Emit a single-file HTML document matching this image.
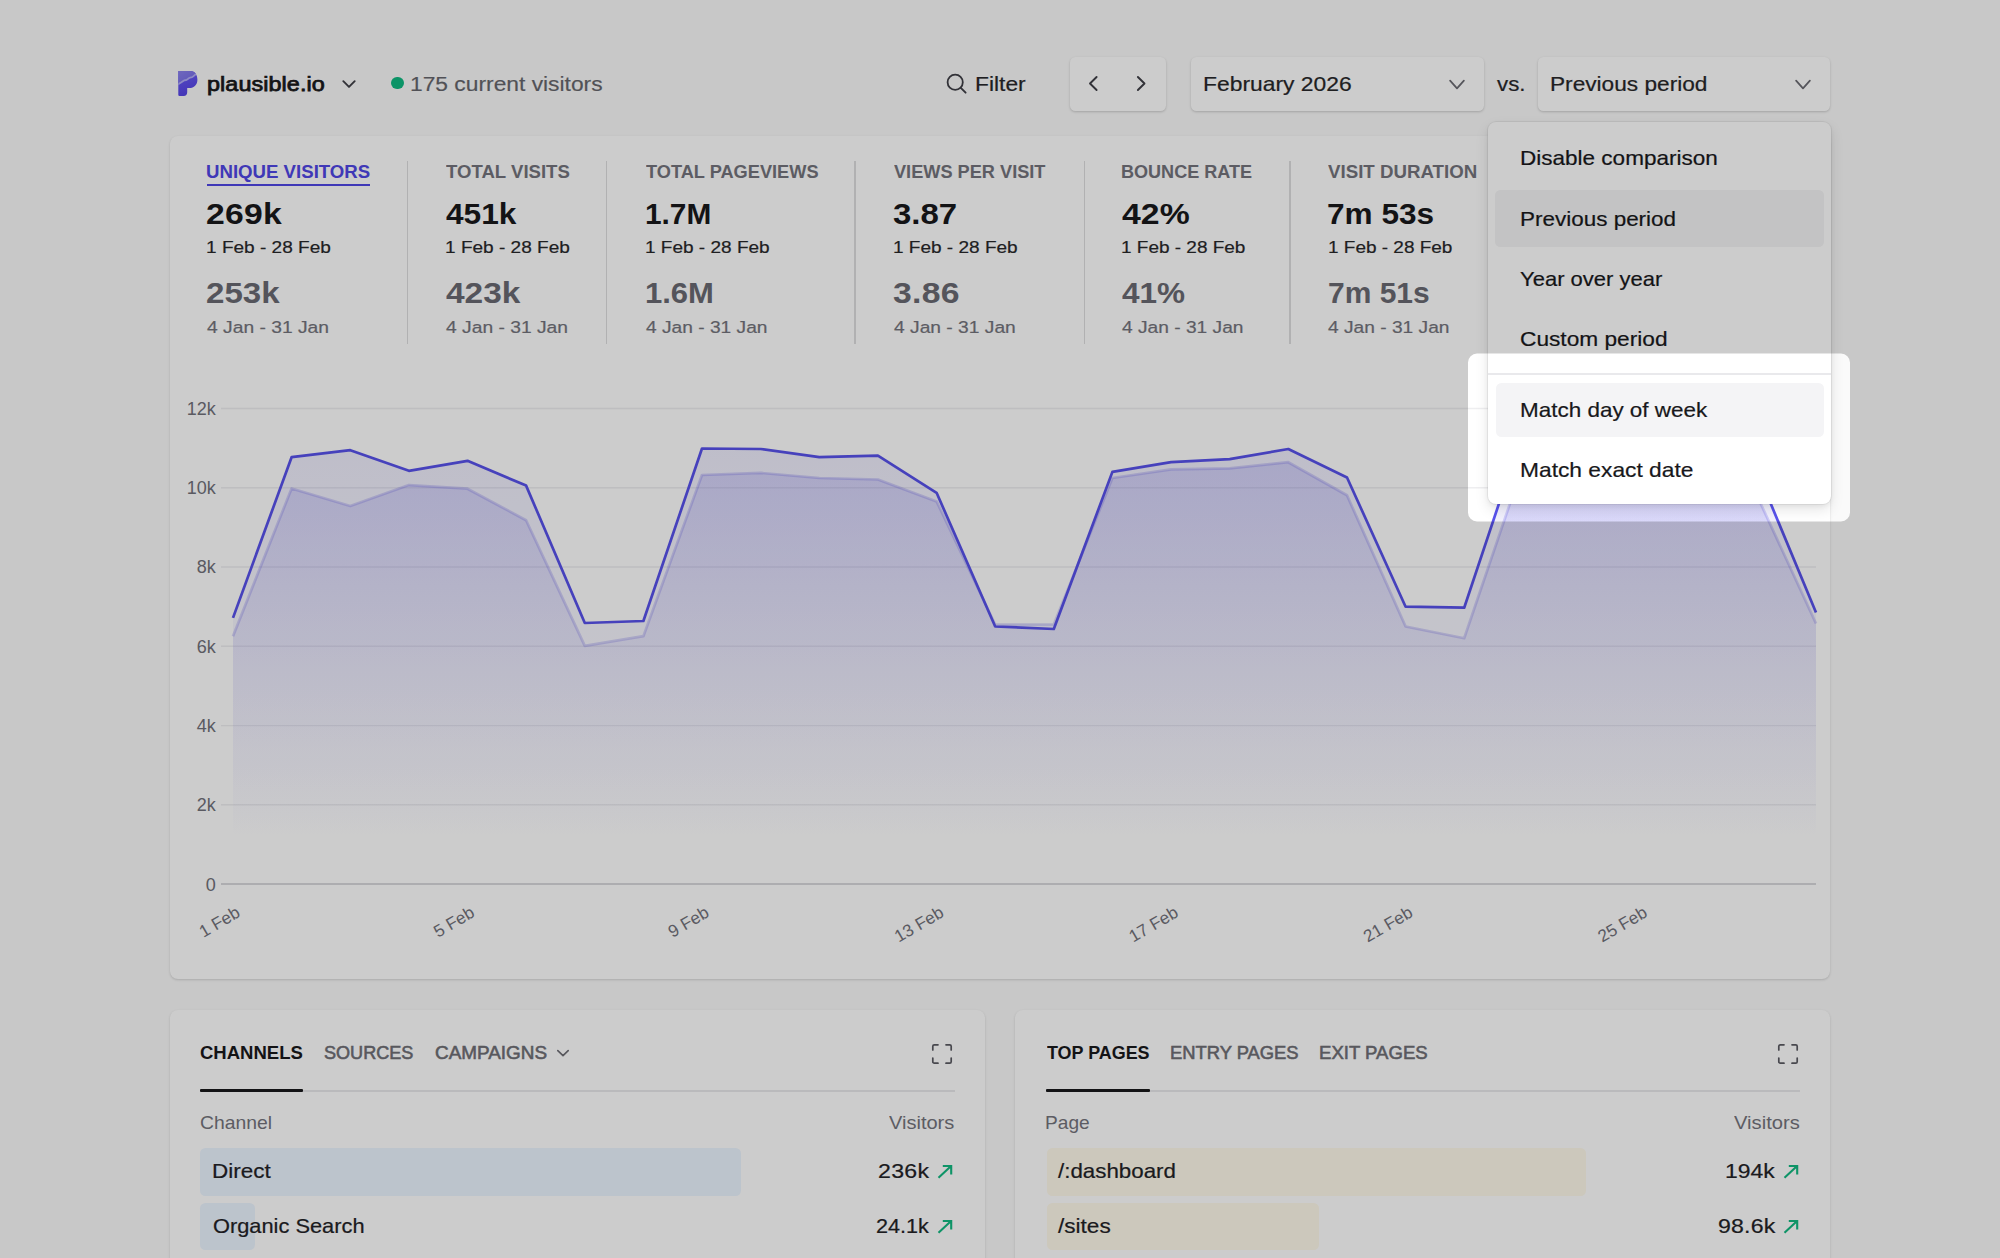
<!DOCTYPE html>
<html lang="en"><head><meta charset="utf-8"><title>Plausible · plausible.io</title>
<style>
html,body{margin:0;padding:0}
header,main,section{display:block;margin:0;padding:0}
body{width:2000px;height:1258px;overflow:hidden;position:relative;background:#fafafa;font-family:"Liberation Sans",sans-serif}
.abs{position:absolute}
.t{position:absolute;white-space:nowrap;line-height:1;margin:0;transform-origin:0 0}
.card{background:#fff;border-radius:8px;box-shadow:0 1px 3px rgba(0,0,0,.10),0 1px 2px rgba(0,0,0,.06)}
.btn{background:#fff;border-radius:5.500px;box-shadow:0 1px 3px rgba(0,0,0,.12),0 1px 2px rgba(0,0,0,.07)}
.menu{background:#fff;border-radius:8px;box-shadow:0 0 0 1px rgba(0,0,0,.05),0 6px 14px rgba(0,0,0,.10),0 2px 5px rgba(0,0,0,.06)}
.bar{border-radius:5.500px}
.ax{font-family:"Liberation Sans",sans-serif;font-size:17.140px;fill:#71717a}
</style></head><body>
<header>
<svg class="abs" style="left:177px;top:70px" width="22" height="27" viewBox="0 0 22 27">
<defs><linearGradient id="lg" x1="0" y1="0" x2="0.3" y2="1"><stop offset="0" stop-color="#6c5ef6"/><stop offset="1" stop-color="#5644e6"/></linearGradient>
<linearGradient id="lg2" x1="0" y1="0" x2="1" y2="1"><stop offset="0" stop-color="#8d84ee"/><stop offset="1" stop-color="#6f65e4"/></linearGradient>
<clipPath id="lc"><path d="M1.300 1H13.700C18 1 20.400 5 20.400 9.700C20.400 14.700 17 18.100 12.300 18.100H10.200V22.300a3.600 3.600 0 0 1-3.600 3.600H2.500a1.200 1.200 0 0 1-1.200-1.200Z"/></clipPath></defs>
<path d="M1.300 1H13.700C18 1 20.400 5 20.400 9.700C20.400 14.700 17 18.100 12.300 18.100H10.200V22.300a3.600 3.600 0 0 1-3.600 3.600H2.500a1.200 1.200 0 0 1-1.200-1.200Z" fill="url(#lg)"/>
<g clip-path="url(#lc)"><path d="M1.300 14.200C3.500 13 5 12 7 10.600C8 10 8.600 10 9.400 10C10.500 9.600 11 8.800 11.800 8.200C13 7.400 14.200 7.400 15.400 7C17 6.200 18 5 19.600 3.400L22 0L0 0Z" fill="url(#lg2)"/>
<path d="M1.300 14.200C3.500 13 5 12 7 10.600C8 10 8.600 10 9.400 10C10.500 9.600 11 8.800 11.800 8.200C13 7.400 14.200 7.400 15.400 7C17 6.200 18 5 19.600 3.400" fill="none" stroke="#b3aef5" stroke-width="1.800" stroke-linecap="round"/></g>
</svg>
<div class="t" style="left:206.68px;top:73.65px;font-size:20.50px;letter-spacing:0.064px;color:#18181b;transform:scaleX(1.1400);-webkit-text-stroke:0.75px #18181b;">plausible.io</div>
<svg class="abs" style="left:340px;top:77px" width="18" height="14" viewBox="0 0 18 14"><path d="M3.3 4.2l5.700 5.700 5.700-5.700" fill="none" stroke="#3f3f46" stroke-width="1.9" stroke-linecap="round" stroke-linejoin="round"/></svg>
<div class="abs" style="left:391.2px;top:76.900px;width:12.600px;height:12.600px;border-radius:50%;background:#10b981"></div>
<div class="t" style="left:410.49px;top:73.82px;font-size:20.30px;letter-spacing:0.000px;color:#66666c;transform:scaleX(1.1240);-webkit-text-stroke:0.15px #66666c;">175 current visitors</div>
<svg class="abs" style="left:944px;top:71px" width="26" height="26" viewBox="0 0 26 26"><circle cx="11.2" cy="11.300" r="7.600" fill="none" stroke="#3f3f46" stroke-width="1.8"/><path d="M16.800 16.900l4.800 4.800" stroke="#3f3f46" stroke-width="1.9" stroke-linecap="round"/></svg>
<div class="t" style="left:975.17px;top:74.07px;font-size:20.30px;letter-spacing:0.000px;color:#27272a;transform:scaleX(1.1243);-webkit-text-stroke:0.2px #27272a;">Filter</div>
<div class="abs btn" style="left:1069.500px;top:57px;width:96.800px;height:54px"></div>
<svg class="abs" style="left:1083px;top:71px" width="20" height="26" viewBox="0 0 20 26"><path d="M13.600 6L7 12.500l6.600 6.500" fill="none" stroke="#3f3f46" stroke-width="1.900" stroke-linecap="round" stroke-linejoin="round"/></svg>
<svg class="abs" style="left:1131px;top:71px" width="20" height="26" viewBox="0 0 20 26"><path d="M6.900 6l6.600 6.500-6.600 6.500" fill="none" stroke="#3f3f46" stroke-width="1.900" stroke-linecap="round" stroke-linejoin="round"/></svg>
<div class="abs btn" style="left:1191.200px;top:57px;width:292.800px;height:54px"></div>
<div class="t" style="left:1203.27px;top:74.07px;font-size:20.30px;letter-spacing:0.000px;color:#27272a;transform:scaleX(1.1272);-webkit-text-stroke:0.2px #27272a;">February 2026</div>
<svg class="abs" style="left:1445.5px;top:77px" width="22" height="16" viewBox="0 0 22 16"><path d="M4.100 3.700l6.900 7.600 6.900-7.600" fill="none" stroke="#6b6b72" stroke-width="1.750" stroke-linecap="round" stroke-linejoin="round"/></svg>
<div class="t" style="left:1497.09px;top:74.07px;font-size:20.30px;letter-spacing:-0.000px;color:#27272a;transform:scaleX(1.0979);-webkit-text-stroke:0.2px #27272a;">vs.</div>
<div class="abs btn" style="left:1537.500px;top:57px;width:292.300px;height:54px"></div>
<div class="t" style="left:1549.69px;top:74.07px;font-size:20.30px;letter-spacing:0.000px;color:#27272a;transform:scaleX(1.1171);-webkit-text-stroke:0.2px #27272a;">Previous period</div>
<svg class="abs" style="left:1791.5px;top:77px" width="22" height="16" viewBox="0 0 22 16"><path d="M4.100 3.700l6.900 7.600 6.900-7.600" fill="none" stroke="#6b6b72" stroke-width="1.750" stroke-linecap="round" stroke-linejoin="round"/></svg>
</header>
<main>
<section aria-label="Top stats and graph">
<div class="abs card" style="left:169.700px;top:136.200px;width:1660.600px;height:842.600px"></div>
<div class="t" style="left:205.88px;top:163.75px;font-size:17.90px;letter-spacing:0.000px;color:#4f46e5;transform:scaleX(1.0411);font-weight:700;">UNIQUE VISITORS</div>
<div class="abs" style="left:206.5px;top:183.700px;width:163.5px;height:2px;background:#4f46e5"></div>
<div class="t" style="left:206.32px;top:199.44px;font-size:29.60px;letter-spacing:0.176px;color:#18181b;transform:scaleX(1.1400);font-weight:700;">269k</div>
<div class="t" style="left:206.27px;top:239.04px;font-size:17.20px;letter-spacing:0.000px;color:#27272a;transform:scaleX(1.1078);-webkit-text-stroke:0.2px #27272a;">1 Feb - 28 Feb</div>
<div class="t" style="left:206.34px;top:278.34px;font-size:29.60px;letter-spacing:0.000px;color:#6a6a72;transform:scaleX(1.1184);font-weight:700;">253k</div>
<div class="t" style="left:207.21px;top:319.44px;font-size:17.20px;letter-spacing:0.000px;color:#74747c;transform:scaleX(1.1200);-webkit-text-stroke:0.2px #74747c;">4 Jan - 31 Jan</div>
<div class="t" style="left:445.81px;top:163.75px;font-size:17.90px;letter-spacing:0.000px;color:#74747c;transform:scaleX(1.0380);font-weight:700;">TOTAL VISITS</div>
<div class="t" style="left:446.02px;top:199.44px;font-size:29.60px;letter-spacing:0.000px;color:#18181b;transform:scaleX(1.0701);font-weight:700;">451k</div>
<div class="t" style="left:445.27px;top:239.04px;font-size:17.20px;letter-spacing:0.000px;color:#27272a;transform:scaleX(1.1078);-webkit-text-stroke:0.2px #27272a;">1 Feb - 28 Feb</div>
<div class="t" style="left:446.00px;top:278.34px;font-size:29.60px;letter-spacing:0.000px;color:#6a6a72;transform:scaleX(1.1312);font-weight:700;">423k</div>
<div class="t" style="left:446.21px;top:319.44px;font-size:17.20px;letter-spacing:-0.000px;color:#74747c;transform:scaleX(1.1200);-webkit-text-stroke:0.2px #74747c;">4 Jan - 31 Jan</div>
<div class="t" style="left:645.57px;top:163.75px;font-size:17.90px;letter-spacing:0.000px;color:#74747c;transform:scaleX(1.0170);font-weight:700;">TOTAL PAGEVIEWS</div>
<div class="t" style="left:645.26px;top:199.44px;font-size:29.60px;letter-spacing:0.000px;color:#18181b;transform:scaleX(1.0071);font-weight:700;">1.7M</div>
<div class="t" style="left:645.02px;top:239.04px;font-size:17.20px;letter-spacing:0.000px;color:#27272a;transform:scaleX(1.1055);-webkit-text-stroke:0.2px #27272a;">1 Feb - 28 Feb</div>
<div class="t" style="left:645.19px;top:278.34px;font-size:29.60px;letter-spacing:0.000px;color:#6a6a72;transform:scaleX(1.0474);font-weight:700;">1.6M</div>
<div class="t" style="left:645.97px;top:319.44px;font-size:17.20px;letter-spacing:0.000px;color:#74747c;transform:scaleX(1.1153);-webkit-text-stroke:0.2px #74747c;">4 Jan - 31 Jan</div>
<div class="t" style="left:893.66px;top:163.75px;font-size:17.90px;letter-spacing:0.000px;color:#74747c;transform:scaleX(1.0156);font-weight:700;">VIEWS PER VISIT</div>
<div class="t" style="left:893.43px;top:199.44px;font-size:29.60px;letter-spacing:0.000px;color:#18181b;transform:scaleX(1.1141);font-weight:700;">3.87</div>
<div class="t" style="left:893.02px;top:239.04px;font-size:17.20px;letter-spacing:0.000px;color:#27272a;transform:scaleX(1.1055);-webkit-text-stroke:0.2px #27272a;">1 Feb - 28 Feb</div>
<div class="t" style="left:893.41px;top:278.34px;font-size:29.60px;letter-spacing:0.261px;color:#6a6a72;transform:scaleX(1.1400);font-weight:700;">3.86</div>
<div class="t" style="left:893.97px;top:319.44px;font-size:17.20px;letter-spacing:0.000px;color:#74747c;transform:scaleX(1.1177);-webkit-text-stroke:0.2px #74747c;">4 Jan - 31 Jan</div>
<div class="t" style="left:1120.83px;top:163.75px;font-size:17.90px;letter-spacing:0.000px;color:#74747c;transform:scaleX(1.0092);font-weight:700;">BOUNCE RATE</div>
<div class="t" style="left:1121.99px;top:199.44px;font-size:29.60px;letter-spacing:0.049px;color:#18181b;transform:scaleX(1.1400);font-weight:700;">42%</div>
<div class="t" style="left:1121.28px;top:239.04px;font-size:17.20px;letter-spacing:-0.000px;color:#27272a;transform:scaleX(1.1033);-webkit-text-stroke:0.2px #27272a;">1 Feb - 28 Feb</div>
<div class="t" style="left:1122.03px;top:278.34px;font-size:29.60px;letter-spacing:0.000px;color:#6a6a72;transform:scaleX(1.0644);font-weight:700;">41%</div>
<div class="t" style="left:1122.22px;top:319.44px;font-size:17.20px;letter-spacing:0.000px;color:#74747c;transform:scaleX(1.1153);-webkit-text-stroke:0.2px #74747c;">4 Jan - 31 Jan</div>
<div class="t" style="left:1328.16px;top:163.75px;font-size:17.90px;letter-spacing:0.000px;color:#74747c;transform:scaleX(1.0453);font-weight:700;">VISIT DURATION</div>
<div class="t" style="left:1327.49px;top:199.44px;font-size:29.60px;letter-spacing:0.000px;color:#18181b;transform:scaleX(1.0666);font-weight:700;">7m 53s</div>
<div class="t" style="left:1327.53px;top:239.04px;font-size:17.20px;letter-spacing:-0.000px;color:#27272a;transform:scaleX(1.1033);-webkit-text-stroke:0.2px #27272a;">1 Feb - 28 Feb</div>
<div class="t" style="left:1327.55px;top:278.34px;font-size:29.60px;letter-spacing:0.000px;color:#6a6a72;transform:scaleX(1.0130);font-weight:700;">7m 51s</div>
<div class="t" style="left:1328.47px;top:319.44px;font-size:17.20px;letter-spacing:0.000px;color:#74747c;transform:scaleX(1.1153);-webkit-text-stroke:0.2px #74747c;">4 Jan - 31 Jan</div>
<div class="abs" style="left:406.8px;top:160.500px;width:1.400px;height:183.300px;background:#dededf"></div>
<div class="abs" style="left:606.05px;top:160.500px;width:1.400px;height:183.300px;background:#dededf"></div>
<div class="abs" style="left:854.3px;top:160.500px;width:1.400px;height:183.300px;background:#dededf"></div>
<div class="abs" style="left:1083.55px;top:160.500px;width:1.400px;height:183.300px;background:#dededf"></div>
<div class="abs" style="left:1289.3px;top:160.500px;width:1.400px;height:183.300px;background:#dededf"></div>
<svg class="abs" style="left:0;top:0" width="2000" height="1000" viewBox="0 0 2000 1000">
<defs><linearGradient id="g1" gradientUnits="userSpaceOnUse" x1="0" y1="385" x2="0" y2="838"><stop offset="0" stop-color="rgb(79,70,229)" stop-opacity="0.11"/><stop offset="1" stop-color="rgb(79,70,229)" stop-opacity="0"/></linearGradient><linearGradient id="g2" gradientUnits="userSpaceOnUse" x1="0" y1="385" x2="0" y2="838"><stop offset="0" stop-color="rgb(79,70,229)" stop-opacity="0.205"/><stop offset="1" stop-color="rgb(79,70,229)" stop-opacity="0"/></linearGradient></defs>
<line x1="221" x2="1816" y1="408.5" y2="408.5" stroke="#eeeef0" stroke-width="1.4"/>
<line x1="221" x2="1816" y1="487.8" y2="487.8" stroke="#eeeef0" stroke-width="1.4"/>
<line x1="221" x2="1816" y1="567.0" y2="567.0" stroke="#eeeef0" stroke-width="1.4"/>
<line x1="221" x2="1816" y1="646.3" y2="646.3" stroke="#eeeef0" stroke-width="1.4"/>
<line x1="221" x2="1816" y1="725.6" y2="725.6" stroke="#eeeef0" stroke-width="1.4"/>
<line x1="221" x2="1816" y1="804.8" y2="804.8" stroke="#eeeef0" stroke-width="1.4"/>
<line x1="221" x2="1816" y1="884.1" y2="884.1" stroke="#d9d9dd" stroke-width="2"/>
<polygon points="233.0,884.1 233.0,636.2 291.6,488.5 350.3,506.0 408.9,485.1 467.5,488.7 526.1,520.2 584.8,645.9 643.4,636.2 702.0,475.0 760.7,472.9 819.3,478.0 877.9,479.5 936.6,501.4 995.2,624.5 1053.8,624.5 1112.4,478.0 1171.1,469.4 1229.7,468.3 1288.3,462.2 1347.0,495.3 1405.6,626.5 1464.2,638.2 1522.9,465.6 1581.5,470.0 1640.1,476.0 1698.7,480.0 1757.4,496.5 1816.0,623.5 1816.0,884.1" fill="url(#g2)"/>
<polygon points="233.0,884.1 233.0,617.9 291.6,457.2 350.3,450.2 408.9,470.8 467.5,460.8 526.1,485.6 584.8,623.0 643.4,621.0 702.0,448.5 760.7,449.0 819.3,457.2 877.9,455.6 936.6,492.8 995.2,626.5 1053.8,629.0 1112.4,471.9 1171.1,462.2 1229.7,459.2 1288.3,449.0 1347.0,477.5 1405.6,606.7 1464.2,607.7 1522.9,432.0 1581.5,440.0 1640.1,445.0 1698.7,450.0 1757.4,471.6 1816.0,612.5 1816.0,884.1" fill="url(#g1)"/>
<polyline points="233.0,636.2 291.6,488.5 350.3,506.0 408.9,485.1 467.5,488.7 526.1,520.2 584.8,645.9 643.4,636.2 702.0,475.0 760.7,472.9 819.3,478.0 877.9,479.5 936.6,501.4 995.2,624.5 1053.8,624.5 1112.4,478.0 1171.1,469.4 1229.7,468.3 1288.3,462.2 1347.0,495.3 1405.6,626.5 1464.2,638.2 1522.9,465.6 1581.5,470.0 1640.1,476.0 1698.7,480.0 1757.4,496.5 1816.0,623.5" fill="none" stroke="rgba(79,70,229,0.21)" stroke-width="2.700" stroke-linejoin="round"/>
<polyline points="233.0,617.9 291.6,457.2 350.3,450.2 408.9,470.8 467.5,460.8 526.1,485.6 584.8,623.0 643.4,621.0 702.0,448.5 760.7,449.0 819.3,457.2 877.9,455.6 936.6,492.8 995.2,626.5 1053.8,629.0 1112.4,471.9 1171.1,462.2 1229.7,459.2 1288.3,449.0 1347.0,477.5 1405.6,606.7 1464.2,607.7 1522.9,432.0 1581.5,440.0 1640.1,445.0 1698.7,450.0 1757.4,471.6 1816.0,612.5" fill="none" stroke="#5852ec" stroke-width="2.700" stroke-linejoin="round"/>
<text x="215.800" y="414.9" text-anchor="end" class="ax" style="font-size:18px">12k</text>
<text x="215.800" y="494.2" text-anchor="end" class="ax" style="font-size:18px">10k</text>
<text x="215.800" y="573.4" text-anchor="end" class="ax" style="font-size:18px">8k</text>
<text x="215.800" y="652.7" text-anchor="end" class="ax" style="font-size:18px">6k</text>
<text x="215.800" y="732.0" text-anchor="end" class="ax" style="font-size:18px">4k</text>
<text x="215.800" y="811.2" text-anchor="end" class="ax" style="font-size:18px">2k</text>
<text x="215.800" y="890.5" text-anchor="end" class="ax" style="font-size:18px">0</text>
<text transform="translate(241.3,915.8) rotate(-30.3)" text-anchor="end" class="ax">1 Feb</text>
<text transform="translate(475.8,915.8) rotate(-30.3)" text-anchor="end" class="ax">5 Feb</text>
<text transform="translate(710.3,915.8) rotate(-30.3)" text-anchor="end" class="ax">9 Feb</text>
<text transform="translate(944.9,915.8) rotate(-30.3)" text-anchor="end" class="ax">13 Feb</text>
<text transform="translate(1179.4,915.8) rotate(-30.3)" text-anchor="end" class="ax">17 Feb</text>
<text transform="translate(1413.9,915.8) rotate(-30.3)" text-anchor="end" class="ax">21 Feb</text>
<text transform="translate(1648.4,915.8) rotate(-30.3)" text-anchor="end" class="ax">25 Feb</text>
</svg>
</section>
<section aria-label="Sources">
<div class="abs card" style="left:169.700px;top:1009.600px;width:815.500px;height:300px"></div>
<div class="t" style="left:200.26px;top:1045.35px;font-size:17.90px;letter-spacing:0.000px;color:#18181b;transform:scaleX(1.0347);font-weight:700;">CHANNELS</div>
<div class="t" style="left:324.39px;top:1045.35px;font-size:17.90px;letter-spacing:0.000px;color:#6e6e75;transform:scaleX(1.0103);-webkit-text-stroke:0.55px #6e6e75;">SOURCES</div>
<div class="t" style="left:435.05px;top:1045.35px;font-size:17.90px;letter-spacing:0.000px;color:#6e6e75;transform:scaleX(1.0565);-webkit-text-stroke:0.55px #6e6e75;">CAMPAIGNS</div>
<svg class="abs" style="left:554px;top:1046px" width="18" height="14" viewBox="0 0 18 14"><path d="M3.800 4.600l5.200 5 5.200-5" fill="none" stroke="#6e6e75" stroke-width="1.650" stroke-linecap="round" stroke-linejoin="round"/></svg>
<svg class="abs" style="left:930.2px;top:1041.7px" width="24" height="24" viewBox="0 0 24 24"><path d="M2.800 8V4.300a1.500 1.500 0 0 1 1.500-1.500H8M16 2.800h3.700a1.500 1.500 0 0 1 1.500 1.500V8M21.200 16v3.700a1.500 1.500 0 0 1-1.500 1.500H16M8 21.200H4.300a1.500 1.500 0 0 1-1.500-1.500V16" fill="none" stroke="#5a5a62" stroke-width="1.700" stroke-linecap="round"/></svg>
<div class="abs" style="left:200px;top:1090.200px;width:754.500px;height:2px;background:#e9e9ec"></div>
<div class="abs" style="left:200px;top:1088.800px;width:103px;height:3.200px;background:#18181b;border-radius:1px"></div>
<div class="t" style="left:200.33px;top:1113.76px;font-size:18.60px;letter-spacing:0.000px;color:#74747c;transform:scaleX(1.0395);">Channel</div>
<div class="t" style="left:888.65px;top:1113.76px;font-size:18.60px;letter-spacing:0.000px;color:#74747c;transform:scaleX(1.0769);">Visitors</div>
<div class="abs bar" style="left:200px;top:1148px;width:540.500px;height:47.500px;background:#ecf5ff"></div>
<div class="abs bar" style="left:200px;top:1202.500px;width:55px;height:47.500px;background:#ecf5ff"></div>
<div class="t" style="left:212.20px;top:1161.42px;font-size:20.30px;letter-spacing:0.000px;color:#222226;transform:scaleX(1.1072);-webkit-text-stroke:0.2px #222226;">Direct</div>
<div class="t" style="left:212.82px;top:1216.42px;font-size:20.30px;letter-spacing:0.000px;color:#222226;transform:scaleX(1.0753);-webkit-text-stroke:0.2px #222226;">Organic Search</div>
<div class="t" style="left:877.59px;top:1161.42px;font-size:20.30px;letter-spacing:0.275px;color:#222226;transform:scaleX(1.1400);-webkit-text-stroke:0.2px #222226;">236k</div>
<div class="t" style="left:875.92px;top:1216.42px;font-size:20.30px;letter-spacing:0.000px;color:#222226;transform:scaleX(1.0644);-webkit-text-stroke:0.2px #222226;">24.1k</div>
<svg class="abs" style="left:935.2px;top:1161px" width="20" height="20" viewBox="0 0 20 20"><path d="M3.500 16.700L15.800 5.300M7.800 5H16.200V13.400" fill="none" stroke="#12b981" stroke-width="2.100" stroke-linecap="butt" stroke-linejoin="miter"/></svg>
<svg class="abs" style="left:935.2px;top:1216px" width="20" height="20" viewBox="0 0 20 20"><path d="M3.500 16.700L15.800 5.300M7.800 5H16.200V13.400" fill="none" stroke="#12b981" stroke-width="2.100" stroke-linecap="butt" stroke-linejoin="miter"/></svg>
</section>
<section aria-label="Pages">
<div class="abs card" style="left:1014.500px;top:1009.600px;width:815.800px;height:300px"></div>
<div class="t" style="left:1046.82px;top:1045.35px;font-size:17.90px;letter-spacing:0.000px;color:#18181b;transform:scaleX(1.0016);font-weight:700;">TOP PAGES</div>
<div class="t" style="left:1170.23px;top:1045.35px;font-size:17.90px;letter-spacing:0.000px;color:#6e6e75;transform:scaleX(1.0263);-webkit-text-stroke:0.55px #6e6e75;">ENTRY PAGES</div>
<div class="t" style="left:1319.21px;top:1045.35px;font-size:17.90px;letter-spacing:-0.000px;color:#6e6e75;transform:scaleX(1.0373);-webkit-text-stroke:0.55px #6e6e75;">EXIT PAGES</div>
<svg class="abs" style="left:1775.5px;top:1041.7px" width="24" height="24" viewBox="0 0 24 24"><path d="M2.800 8V4.300a1.500 1.500 0 0 1 1.500-1.500H8M16 2.800h3.700a1.500 1.500 0 0 1 1.500 1.500V8M21.200 16v3.700a1.500 1.500 0 0 1-1.500 1.500H16M8 21.200H4.300a1.500 1.500 0 0 1-1.500-1.500V16" fill="none" stroke="#5a5a62" stroke-width="1.700" stroke-linecap="round"/></svg>
<div class="abs" style="left:1046px;top:1090.200px;width:753.500px;height:2px;background:#e9e9ec"></div>
<div class="abs" style="left:1046px;top:1088.800px;width:104px;height:3.200px;background:#18181b;border-radius:1px"></div>
<div class="t" style="left:1045.22px;top:1113.76px;font-size:18.60px;letter-spacing:0.000px;color:#74747c;transform:scaleX(1.0278);">Page</div>
<div class="t" style="left:1734.15px;top:1113.76px;font-size:18.60px;letter-spacing:-0.000px;color:#74747c;transform:scaleX(1.0853);">Visitors</div>
<div class="abs bar" style="left:1046.500px;top:1148px;width:539.500px;height:47.500px;background:#fffaeb"></div>
<div class="abs bar" style="left:1046.500px;top:1202.500px;width:272.500px;height:47.500px;background:#fffaeb"></div>
<div class="t" style="left:1058.00px;top:1161.42px;font-size:20.30px;letter-spacing:0.000px;color:#222226;transform:scaleX(1.1005);-webkit-text-stroke:0.2px #222226;">/:dashboard</div>
<div class="t" style="left:1058.00px;top:1216.42px;font-size:20.30px;letter-spacing:0.000px;color:#222226;transform:scaleX(1.1137);-webkit-text-stroke:0.2px #222226;">/sites</div>
<div class="t" style="left:1725.28px;top:1161.42px;font-size:20.30px;letter-spacing:0.000px;color:#222226;transform:scaleX(1.1287);-webkit-text-stroke:0.2px #222226;">194k</div>
<div class="t" style="left:1717.71px;top:1216.42px;font-size:20.30px;letter-spacing:0.156px;color:#222226;transform:scaleX(1.1400);-webkit-text-stroke:0.2px #222226;">98.6k</div>
<svg class="abs" style="left:1781.2px;top:1161px" width="20" height="20" viewBox="0 0 20 20"><path d="M3.500 16.700L15.800 5.300M7.800 5H16.200V13.400" fill="none" stroke="#12b981" stroke-width="2.100" stroke-linecap="butt" stroke-linejoin="miter"/></svg>
<svg class="abs" style="left:1781.2px;top:1216px" width="20" height="20" viewBox="0 0 20 20"><path d="M3.500 16.700L15.800 5.300M7.800 5H16.200V13.400" fill="none" stroke="#12b981" stroke-width="2.100" stroke-linecap="butt" stroke-linejoin="miter"/></svg>
</section>
</main>
<div role="menu" aria-label="Comparison mode">
<div class="abs menu" style="left:1488px;top:121.700px;width:342.500px;height:382.500px"></div>
<div class="abs" style="left:1494.500px;top:190.300px;width:329.800px;height:56.500px;border-radius:5.500px;background:#f4f4f5"></div>
<div class="abs" style="left:1495.500px;top:382.500px;width:328.800px;height:54.800px;border-radius:5.500px;background:#f4f4f6"></div>
<div class="abs" style="left:1488px;top:372.800px;width:342.500px;height:2px;background:#e9e9ec"></div>
<div class="t" style="left:1520.00px;top:148.22px;font-size:20.30px;letter-spacing:0.000px;color:#18181b;transform:scaleX(1.1102);-webkit-text-stroke:0.2px #18181b;">Disable comparison</div>
<div class="t" style="left:1520.00px;top:208.72px;font-size:20.30px;letter-spacing:0.000px;color:#18181b;transform:scaleX(1.1076);-webkit-text-stroke:0.2px #18181b;">Previous period</div>
<div class="t" style="left:1520.45px;top:268.72px;font-size:20.30px;letter-spacing:0.000px;color:#18181b;transform:scaleX(1.0849);-webkit-text-stroke:0.2px #18181b;">Year over year</div>
<div class="t" style="left:1519.66px;top:328.72px;font-size:20.30px;letter-spacing:0.000px;color:#18181b;transform:scaleX(1.1187);-webkit-text-stroke:0.2px #18181b;">Custom period</div>
<div class="t" style="left:1519.70px;top:400.02px;font-size:20.30px;letter-spacing:0.000px;color:#18181b;transform:scaleX(1.1075);-webkit-text-stroke:0.2px #18181b;">Match day of week</div>
<div class="t" style="left:1519.68px;top:460.22px;font-size:20.30px;letter-spacing:0.000px;color:#18181b;transform:scaleX(1.1227);-webkit-text-stroke:0.2px #18181b;">Match exact date</div>
</div>
<!-- tour overlay with spotlight cut-out -->
<svg class="abs" style="left:0;top:0" width="2000" height="1258" viewBox="0 0 2000 1258"><path fill-rule="evenodd" fill="rgba(0,0,0,0.2)" d="M0 0H2000V1258H0Z M1477 353.500H1841a9 9 0 0 1 9 9V512.400a9 9 0 0 1-9 9H1477a9 9 0 0 1-9-9V362.500a9 9 0 0 1 9-9Z"/></svg>
</body></html>
